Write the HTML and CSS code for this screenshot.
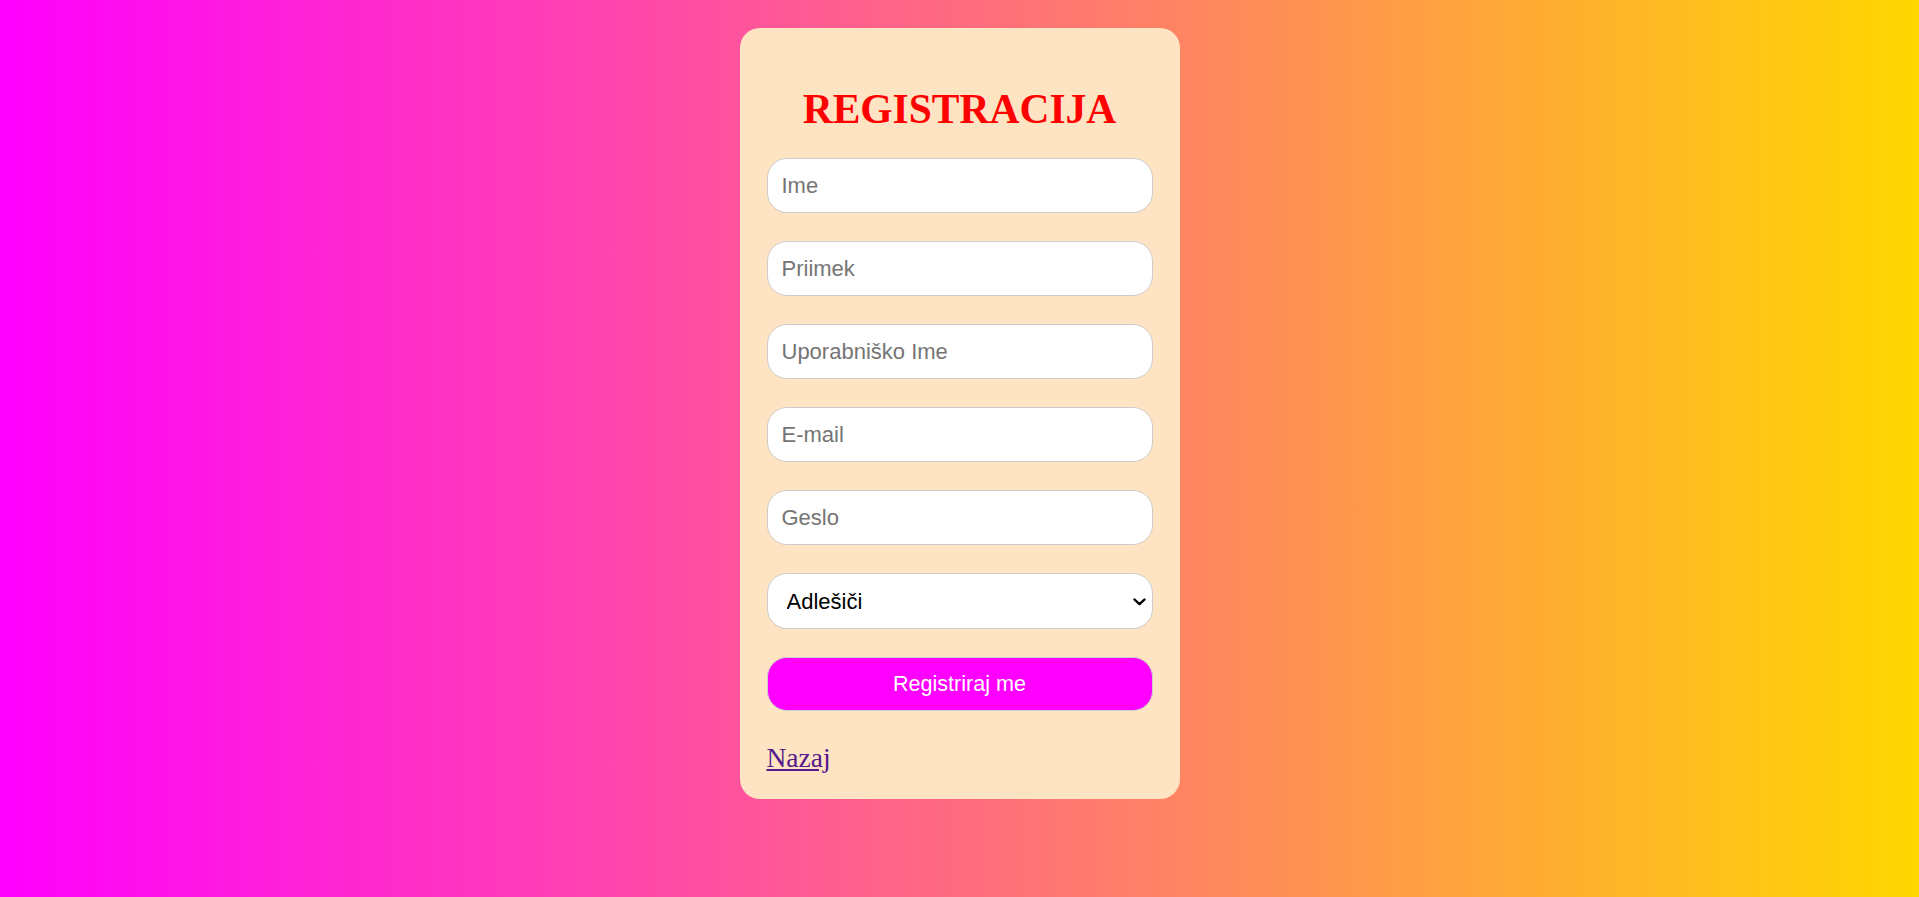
FILE: index.html
```html
<!DOCTYPE html>
<html lang="sl">
<head>
<meta charset="utf-8">
<title>Registracija</title>
<link rel="stylesheet" href="styles.css">
</head>
<body>
<div class="card">
  <h1 class="title">REGISTRACIJA</h1>
  <form class="form">
    <input class="field" type="text" placeholder="Ime">
    <input class="field" type="text" placeholder="Priimek">
    <input class="field" type="text" placeholder="Uporabniško Ime">
    <input class="field" type="email" placeholder="E-mail">
    <input class="field" type="password" placeholder="Geslo">
    <div class="select-wrap">
      <select class="field select">
        <option>Adlešiči</option>
      </select>
      <svg class="chevron" width="13" height="8" viewBox="0 0 13 8" aria-hidden="true">
        <path d="M1.5 1.5 L6.5 6.2 L11.5 1.5" fill="none" stroke="#000" stroke-width="2.4" stroke-linecap="round" stroke-linejoin="round"/>
      </svg>
    </div>
    <button class="btn" type="button">Registriraj me</button>
  </form>
  <a class="back" href="#">Nazaj</a>
</div>
</body>
</html>
```
FILE: styles.css
```css
html, body {
  margin: 0;
  height: 100%;
}
body {
  background: linear-gradient(to right, #ff00ff, #ffd700);
  display: flex;
  flex-direction: column;
  align-items: center;
  padding-top: 28px;
  box-sizing: border-box;
  font-family: "Liberation Serif", "Times New Roman", serif;
}
.card {
  width: 440px;
  box-sizing: border-box;
  background: #ffe4c4;
  border-radius: 20px;
  padding: 58px 27px 26px;
  display: flex;
  flex-direction: column;
}
.title {
  margin: 0;
  font-family: "Liberation Serif", "Times New Roman", serif;
  font-weight: bold;
  font-size: 41.5px;
  line-height: 46px;
  color: #ff0000;
  text-align: center;
}
.form {
  display: flex;
  flex-direction: column;
  gap: 28px;
  margin-top: 26px;
}
.field {
  height: 55px;
  box-sizing: border-box;
  border: 1px solid #cccccc;
  border-radius: 20px;
  background: #ffffff;
  padding: 0 14px;
  font-family: "Liberation Sans", Arial, sans-serif;
  font-size: 22px;
  color: #000;
  outline: none;
  width: 100%;
}
.field::placeholder {
  color: #757575;
}
.select-wrap {
  position: relative;
  display: flex;
}
.select {
  height: 56px;
  padding: 0 30px 0 19px;
  appearance: none;
  -webkit-appearance: none;
}
.chevron {
  position: absolute;
  right: 7px;
  top: 50%;
  margin-top: -3px;
  pointer-events: none;
}
.btn {
  height: 54px;
  box-sizing: border-box;
  border: 1px solid #cccccc;
  border-radius: 20px;
  background: #ff00ff;
  color: #ffffff;
  font-family: "Liberation Sans", Arial, sans-serif;
  font-size: 21.6px;
  width: 100%;
}
.back {
  align-self: flex-start;
  margin-top: 31px;
  font-family: "Liberation Serif", "Times New Roman", serif;
  font-size: 27.5px;
  line-height: 31px;
  color: #551a8b;
  text-decoration: underline;
}
```
